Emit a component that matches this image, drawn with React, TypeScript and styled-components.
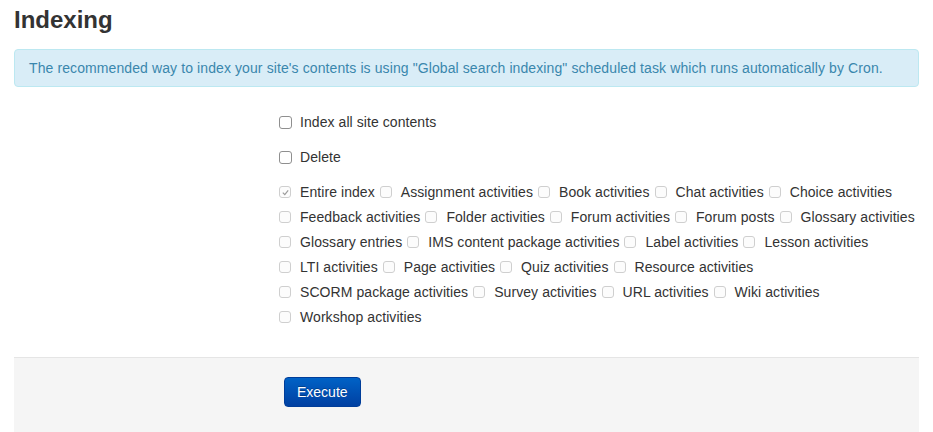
import styled, { createGlobalStyle } from "styled-components";

const GlobalStyle = createGlobalStyle`
  html, body {
    margin: 0;
    padding: 0;
    background: #fff;
  }
  body {
    font-family: "Liberation Sans", Arial, sans-serif;
    font-size: 14px;
    line-height: 20px;
    color: #333;
  }
`;

const activities = [
  "Entire index",
  "Assignment activities",
  "Book activities",
  "Chat activities",
  "Choice activities",
  "Feedback activities",
  "Folder activities",
  "Forum activities",
  "Forum posts",
  "Glossary activities",
  "Glossary entries",
  "IMS content package activities",
  "Label activities",
  "Lesson activities",
  "LTI activities",
  "Page activities",
  "Quiz activities",
  "Resource activities",
  "SCORM package activities",
  "Survey activities",
  "URL activities",
  "Wiki activities",
  "Workshop activities",
];

const Box: React.FC<{ small?: boolean; checked?: boolean }> = ({
  small,
  checked,
}) => (
  <CheckBox $small={small}>
    {checked && (
      <svg width="9" height="9" viewBox="0 0 10 10">
        <path
          d="M2 5.2 L4.2 7.4 L8 2.6"
          fill="none"
          stroke="#9a9a9a"
          strokeWidth="1.3"
        />
      </svg>
    )}
  </CheckBox>
);

const App: React.FC = () => {
  return (
    <Page>
      <GlobalStyle />
      <Heading>Indexing</Heading>
      <Alert>
        The recommended way to index your site's contents is using "Global
        search indexing" scheduled task which runs automatically by Cron.
      </Alert>
      <Form>
        <Field>
          <Box />
          <Label>Index all site contents</Label>
        </Field>
        <Field>
          <Box />
          <Label>Delete</Label>
        </Field>
        <Group>
          {activities.map((name, i) => (
            <GroupItem key={name}>
              <Box small checked={i === 0} />
              <Label>{name}</Label>
            </GroupItem>
          ))}
        </Group>
      </Form>
      <Footer>
        <Button>Execute</Button>
      </Footer>
    </Page>
  );
};

const Page = styled.div`
  padding: 0 14px;
`;

const Heading = styled.h2`
  margin: 0;
  padding-top: 6px;
  font-size: 24px;
  line-height: 28px;
  font-weight: bold;
  color: #333;
`;

const Alert = styled.div`
  margin-top: 15px;
  padding: 8px 14px;
  background: #d9edf7;
  border: 1px solid #bce8f1;
  border-radius: 4px;
  color: #3a87ad;
  letter-spacing: 0.1px;
  white-space: nowrap;
`;

const Form = styled.div`
  display: flex;
  flex-direction: column;
  gap: 15px;
  padding: 25px 0 30px 265px;
`;

const Field = styled.div`
  display: flex;
  align-items: center;
  height: 20px;
  gap: 8px;
`;

const Group = styled.div`
  display: flex;
  flex-wrap: wrap;
  row-gap: 5px;
  column-gap: 5px;
`;

const GroupItem = styled.div`
  display: flex;
  align-items: center;
  height: 20px;
  gap: 9px;
`;

const CheckBox = styled.span<{ $small?: boolean }>`
  display: inline-flex;
  align-items: center;
  justify-content: center;
  box-sizing: border-box;
  width: ${(p) => (p.$small ? "12px" : "13px")};
  height: ${(p) => (p.$small ? "12px" : "13px")};
  border: 1px solid ${(p) => (p.$small ? "#cfcfcf" : "#8f8f8f")};
  border-radius: 3px;
  background: ${(p) => (p.$small ? "#fcfcfc" : "#fff")};
`;

const Label = styled.span`
  white-space: nowrap;
  letter-spacing: 0.07px;
`;

const Footer = styled.div`
  background: #f5f5f5;
  border-top: 1px solid #e5e5e5;
  padding: 19px 0 30px 270px;
`;

const Button = styled.button`
  font-family: "Liberation Sans", Arial, sans-serif;
  font-size: 14px;
  line-height: 20px;
  padding: 4px 12px;
  color: #fff;
  background: linear-gradient(to bottom, #0062c6, #0040a2);
  border: 1px solid #003d99;
  border-radius: 4px;
  text-shadow: 0 -1px 0 rgba(0, 0, 0, 0.25);
  cursor: pointer;
`;

export default App;
